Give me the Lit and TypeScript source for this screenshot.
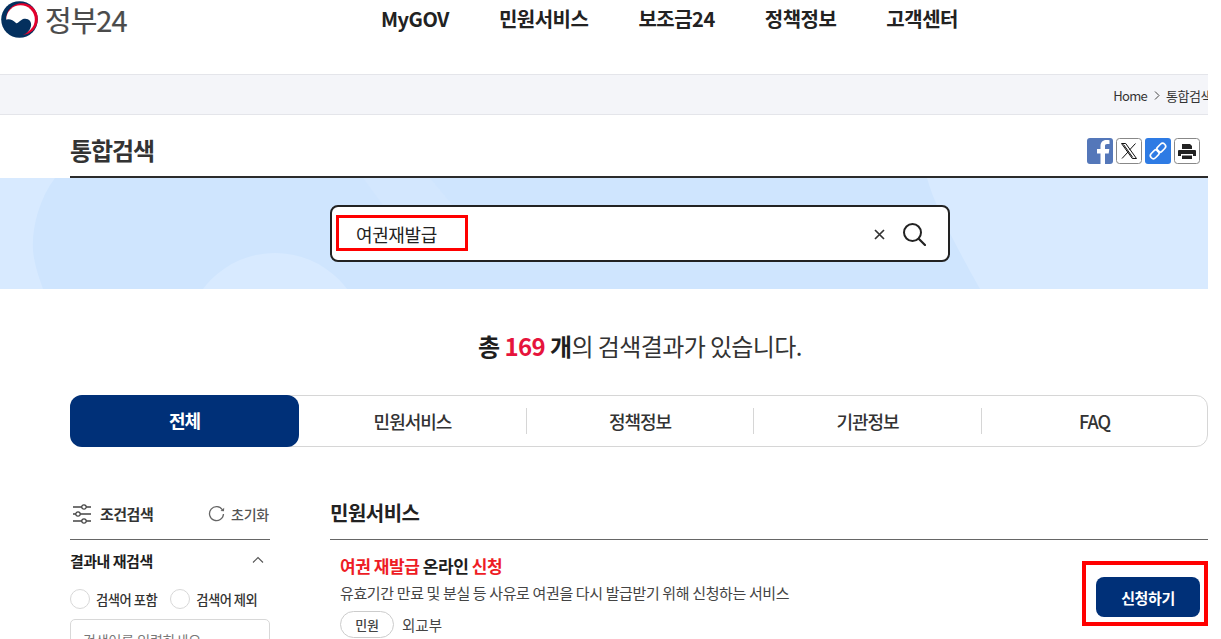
import { LitElement, html, css, svg } from "lit";
import { customElement } from "lit/decorators.js";

@customElement("app-root")
export class AppRoot extends LitElement {
  static styles = css`
    :host { display: block; width: 1208px; height: 639px; overflow: hidden; position: relative; background: #fff;
      font-family: "Noto Sans CJK KR", "Noto Sans", sans-serif; color: #1e1e1e; }
    * { box-sizing: border-box; }
    .header { height: 74px; display: flex; position: relative; }
    .logo { position: absolute; left: 0; top: 0; display: flex; align-items: center; height: 40px; padding: 0 0 2px 1px; gap: 7px; }
    .logo svg { width: 37px; height: 37px; display: block; }
    .logo span { font-size: 29px; color: #4b4b4b; letter-spacing: -1px; line-height: 38px; -webkit-text-stroke: 0.2px #4b4b4b; }
    .nav { display: flex; gap: 50px; margin-left: 381px; padding-top: 6px; font-size: 20px; font-weight: 700; letter-spacing: -0.5px; line-height: 26px; color: #222; }
    .crumb { height: 41px; background: #f4f5f9; border-top: 1px solid #e4e5ea; border-bottom: 1px solid #e4e5ea; display: flex; align-items: center; justify-content: flex-end; gap: 6px; font-size: 13px; letter-spacing: -0.7px; color: #333; white-space: nowrap; overflow: hidden; padding-top: 1px; }
    .crumb .cur { width: 42px; overflow: hidden; flex: none; letter-spacing: -0.5px; }
    .crumb svg { width: 6px; height: 9px; flex: none; margin-left: 1px; }
    .title { margin-left: 70px; height: 63px; border-bottom: 2px solid #2b2b2b; display: flex; align-items: center; justify-content: space-between; padding: 8px 8px 0 0; }
    .title h1 { margin: 0; font-size: 24px; font-weight: 700; letter-spacing: -1.1px; color: #333; line-height: 32px; }
    .share { display: flex; gap: 3px; position: relative; top: 1px; }
    .share svg { width: 26px; height: 26px; display: block; }
    .band { height: 111px; position: relative; overflow: hidden; background: #d8eaff; padding: 27px 0 0 330px; }
    .band .bg { position: absolute; inset: 0; width: 100%; height: 100%; }
    .box { position: relative; width: 620px; height: 57px; background: #fff; border: 2px solid #222; border-radius: 8px; display: flex; align-items: center; padding: 0 22px 0 24px; }
    .box .q { font-size: 18px; letter-spacing: -0.4px; flex: 1; color: #222; }
    .box .xx { width: 11px; height: 11px; margin-right: 17px; margin-top: 2px; display: block; }
    .box .sr { width: 24px; height: 24px; display: block; }
    .mark { position: absolute; border: 3px solid #f00; pointer-events: none; }
    .mark.a { left: 4px; top: 8px; width: 132px; height: 36px; }
    .count { text-align: center; font-size: 24px; letter-spacing: -0.6px; line-height: 36px; padding-top: 39px; padding-left: 72px; color: #333; }
    .count b { font-weight: 700; color: #1e1e1e; }
    .count em { font-style: normal; font-weight: 700; color: #e6143c; }
    .tabs { margin: 31px 0 0 70px; height: 52px; width: 1138px; border: 1px solid #d6d6d6; border-radius: 12px; display: grid; grid-template-columns: 228px 227px 227px 228px 1fr; align-items: center; font-size: 18px; font-weight: 500; letter-spacing: -1px; color: #333; position: relative; }
    .tabs > div { text-align: center; line-height: 26px; position: relative; }
    .tabs .on { background: #003078; color: #fff; font-weight: 700; border-radius: 12px; height: 52px; line-height: 50px; margin: -1px 0 -1px -1px; }
    .tabs .sep { border-left: 1px solid #d6d6d6; }
    .body { display: grid; grid-template-columns: 200px 1fr; gap: 60px; margin: 44px 0 0 70px; }
    .side-h { display: flex; align-items: center; height: 49px; border-bottom: 1px solid #666; padding-bottom: 3px; font-size: 15px; letter-spacing: -0.5px; color: #333; position: relative; }
    .side-h svg { flex: none; }
    .side-h svg.filt { margin-left: 2px; }
    .side-h b { font-weight: 700; margin-left: 8px; color: #333; flex: 1; }
    .side-h span { font-size: 14px; font-weight: 500; color: #555; margin-left: 6px; margin-right: 1px; letter-spacing: -0.2px; }
    .side-t { display: flex; justify-content: space-between; align-items: center; height: 40px; font-size: 15px; font-weight: 700; letter-spacing: -0.5px; padding-right: 6px; }
    .radios { display: flex; align-items: center; margin-top: 8px; height: 22px; font-size: 13.3px; letter-spacing: -0.5px; color: #333; font-weight: 500; }
    .radio { width: 20px; height: 20px; border: 1px solid #d8d8d8; border-radius: 50%; flex: none; margin-right: 6px; }
    .radios span { margin-right: 13px; white-space: nowrap; }
    .inp { margin-top: 9px; height: 44px; border: 1px solid #d8d8d8; border-radius: 5px; padding: 10px 12px; font-size: 14px; color: #777; letter-spacing: -0.1px; line-height: 20px; }
    .main h2 { margin: 0; height: 49px; border-bottom: 1px solid #666; font-size: 20px; font-weight: 700; letter-spacing: -0.5px; line-height: 28px; color: #222; padding-top: 8px; }
    .item { display: flex; justify-content: space-between; position: relative; }
    .text { padding: 14px 0 0 10px; }
    .t1 { font-size: 17px; font-weight: 700; letter-spacing: -0.45px; line-height: 24px; color: #1e1e1e; }
    .t1 i { font-style: normal; color: #ee1c25; }
    .t2 { font-size: 15px; letter-spacing: -0.37px; line-height: 22px; color: #444; margin-top: 4px; }
    .t3 { display: flex; align-items: center; gap: 8px; margin-top: 7px; font-size: 14.5px; color: #444; }
    .pill { width: 54px; height: 27px; border: 1px solid #ccc; border-radius: 14px; font-size: 13px; font-weight: 500; color: #444; display: flex; align-items: center; justify-content: center; letter-spacing: -0.3px; }
    .btn { width: 104px; height: 40px; background: #003078; border-radius: 8px; color: #fff; font-size: 15px; font-weight: 700; letter-spacing: -0.4px; display: flex; align-items: center; justify-content: center; margin: 37px 8px 0 0; flex: none; }
    .mark.b { right: 0; top: 21px; width: 126px; height: 65px; border-width: 4px; }
  `;

  logo() {
    return svg`<svg viewBox="0 0 37 37" aria-hidden="true">
      <circle cx="18.5" cy="18.5" r="18.3" fill="#04305e"/>
      <circle cx="21" cy="18" r="15.800" fill="#e4002b"/>
      <circle cx="19.500" cy="18.500" r="14.300" fill="#fff"/>
      <path d="M4 19C8 17 12 19 15 22C17 23 18 20 22 18C27 16.500 31 20 30 25C29 30 25 33 21 34.500L10 34L3 26z" fill="#04305e"/>
    </svg>`;
  }

  render() {
    return html`
      <div class="header">
        <div class="logo">${this.logo()}<span>정부24</span></div>
        <div class="nav"><span>MyGOV</span><span>민원서비스</span><span>보조금24</span><span>정책정보</span><span>고객센터</span></div>
      </div>
      <div class="crumb"><span>Home</span>
        <svg viewBox="0 0 6 9"><path d="M1 .5 5 4.500 1 8.500" fill="none" stroke="#444" stroke-width="1"/></svg>
        <span class="cur">통합검색</span></div>
      <div class="title"><h1>통합검색</h1>
        <div class="share">
          <svg viewBox="0 0 26 26"><rect width="26" height="26" rx="3" fill="#5477b9"/><path d="M13.500 26V15.500H10V11h3.500V8c0-3.800 2.300-6 5.700-6 1.600 0 3 .1 3.300.2v3.900h-2.300c-1.800 0-2.200.9-2.200 2.100V11h4.300l-.6 4.500h-3.700V26z" fill="#fff"/></svg>
          <svg viewBox="0 0 26 26"><rect x=".5" y=".5" width="25" height="25" rx="3" fill="#fff" stroke="#888"/><path d="M5.500 5.500h4.200l10.800 15h-4.200zM7.500 6.500l9.300 13M19.500 5.500l-6 6.500M12 14l-6 6.500" fill="none" stroke="#111" stroke-width="1"/></svg>
          <svg viewBox="0 0 26 26"><rect width="26" height="26" rx="3" fill="#2e7be4"/><g fill="none" stroke="#fff" stroke-width="1.600" transform="rotate(-45 13 13)"><rect x="3.500" y="10" width="10" height="6" rx="3"/><rect x="12.500" y="10" width="10" height="6" rx="3"/></g></svg>
          <svg viewBox="0 0 26 26"><rect x=".5" y=".5" width="25" height="25" rx="3" fill="#fff" stroke="#888"/><path d="M8 6h8l2 2v3H8zM5 12h16a1 1 0 0 1 1 1v5h-3v-2H7v2H4v-5a1 1 0 0 1 1-1zM8 17.500h10V21H8z" fill="#222"/></svg>
        </div>
      </div>
      <div class="band">
        <svg class="bg" viewBox="0 0 1208 111" preserveAspectRatio="none" aria-hidden="true">
          <path d="M55 0C36 25 30 60 34 80c2 12 6 22 9 31H980C960 75 935 30 927 0z" fill="#cfe5fe"/>
          <path d="M363 0 385 30H455L430 0z" fill="#d3e7fe"/>
          <circle cx="275" cy="165" r="90" fill="#d8eaff"/>
        </svg>
        <div class="box">
          <div class="mark a"></div>
          <span class="q">여권재발급</span>
          <svg class="xx" viewBox="0 0 11 11"><path d="M1 1l9 9M10 1l-9 9" stroke="#333" stroke-width="1.700"/></svg>
          <svg class="sr" viewBox="0 0 24 24"><circle cx="10.500" cy="10.500" r="8.500" fill="none" stroke="#222" stroke-width="2"/><path d="m17 17 6 6" stroke="#222" stroke-width="2.200" stroke-linecap="round"/></svg>
        </div>
      </div>
      <div class="count"><b>총 <em>169</em> 개</b>의 검색결과가 있습니다.</div>
      <div class="tabs">
        <div class="on">전체</div><div>민원서비스</div><div class="sep">정책정보</div><div class="sep">기관정보</div><div class="sep">FAQ</div>
      </div>
      <div class="body">
        <div class="side">
          <div class="side-h">
            <svg class="filt" width="20" height="20" viewBox="0 0 20 20"><path d="M1 3h18M1 10h18M1 17h18" stroke="#444" stroke-width="1.400"/><circle cx="12" cy="3" r="2.200" fill="#fff" stroke="#444" stroke-width="1.200"/><circle cx="6" cy="10" r="2.200" fill="#fff" stroke="#444" stroke-width="1.200"/><circle cx="12" cy="17" r="2.200" fill="#fff" stroke="#444" stroke-width="1.200"/></svg>
            <b>조건검색</b>
            <svg width="17" height="17" viewBox="0 0 17 17"><path d="M14.500 5A7 7 0 1 0 15.500 9" fill="none" stroke="#666" stroke-width="1.300"/><path d="m12.500 6 3.500.2.200-3.500z" fill="#666"/></svg>
            <span>초기화</span>
          </div>
          <div class="side-t"><span>결과내 재검색</span><svg width="12" height="8" viewBox="0 0 12 8"><path d="M1 6.500 6 1.500l5 5" fill="none" stroke="#555" stroke-width="1.100"/></svg></div>
          <div class="radios"><div class="radio"></div><span>검색어 포함</span><div class="radio"></div><span>검색어 제외</span></div>
          <div class="inp">검색어를 입력하세요</div>
        </div>
        <div class="main">
          <h2>민원서비스</h2>
          <div class="item">
            <div class="text">
              <div class="t1"><i>여권 재발급</i> 온라인 <i>신청</i></div>
              <div class="t2">유효기간 만료 및 분실 등 사유로 여권을 다시 발급받기 위해 신청하는 서비스</div>
              <div class="t3"><span class="pill">민원</span><span>외교부</span></div>
            </div>
            <div class="btn">신청하기</div>
            <div class="mark b"></div>
          </div>
        </div>
      </div>
    `;
  }
}
